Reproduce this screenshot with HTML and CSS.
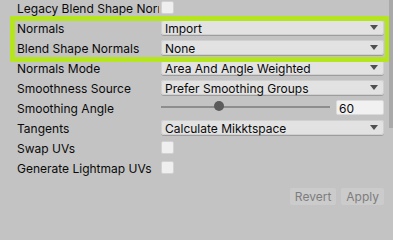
FILE: index.html
```html
<!DOCTYPE html>
<html>
<head>
<meta charset="utf-8">
<link rel="stylesheet" href="styles.css">
</head>
<body>
<div class="panel">
  <div class="content">
    <div class="row">
      <div class="label">Legacy Blend Shape Normals</div>
      <div class="ctl"><span class="check"></span></div>
    </div>
    <div class="row">
      <div class="label">Normals</div>
      <div class="ctl"><div class="popup"><span class="val">Import</span><svg class="arrow" width="8" height="5" viewBox="0 0 8 5"><path d="M0 0H8L4 5Z"/></svg></div></div>
    </div>
    <div class="row">
      <div class="label">Blend Shape Normals</div>
      <div class="ctl"><div class="popup"><span class="val">None</span><svg class="arrow" width="8" height="5" viewBox="0 0 8 5"><path d="M0 0H8L4 5Z"/></svg></div></div>
    </div>
    <div class="row">
      <div class="label">Normals Mode</div>
      <div class="ctl"><div class="popup"><span class="val">Area And Angle Weighted</span><svg class="arrow" width="8" height="5" viewBox="0 0 8 5"><path d="M0 0H8L4 5Z"/></svg></div></div>
    </div>
    <div class="row">
      <div class="label">Smoothness Source</div>
      <div class="ctl"><div class="popup"><span class="val">Prefer Smoothing Groups</span><svg class="arrow" width="8" height="5" viewBox="0 0 8 5"><path d="M0 0H8L4 5Z"/></svg></div></div>
    </div>
    <div class="row">
      <div class="label">Smoothing Angle</div>
      <div class="ctl slider">
        <div class="track-area">
          <div class="track"></div>
          <div class="thumb" style="left: calc((100% - 10px) * 0.333)"></div>
        </div>
        <div class="field">60</div>
      </div>
    </div>
    <div class="row">
      <div class="label">Tangents</div>
      <div class="ctl"><div class="popup"><span class="val">Calculate Mikktspace</span><svg class="arrow" width="8" height="5" viewBox="0 0 8 5"><path d="M0 0H8L4 5Z"/></svg></div></div>
    </div>
    <div class="row">
      <div class="label">Swap UVs</div>
      <div class="ctl"><span class="check"></span></div>
    </div>
    <div class="row">
      <div class="label">Generate Lightmap UVs</div>
      <div class="ctl"><span class="check"></span></div>
    </div>
    <div class="buttons">
      <div class="btn">Revert</div>
      <div class="btn">Apply</div>
    </div>
    <div class="highlight"></div>
  </div>
  <div class="scrollbar"><div class="sb-thumb"></div></div>
</div>
</body>
</html>
```

FILE: styles.css
```css
html, body {
  margin: 0;
  padding: 0;
  background: #c3c3c3;
  width: 393px;
  height: 210px;
  overflow: hidden;
}

body {
  font-family: Inter, "Noto Sans", sans-serif;
  font-size: 12px;
  color: #0a0a0a;
}

.panel {
  display: flex;
  width: 393px;
  height: 210px;
}

.content {
  position: relative;
  flex: 1;
  margin-top: -0.5px;
  padding-left: 17px;
  padding-right: 5px;
}

.row {
  display: flex;
  height: 20px;
  align-items: flex-start;
}

.label {
  flex: 0 0 142px;
  margin-right: 2px;
  white-space: nowrap;
  overflow: hidden;
  line-height: 17px;
}

.ctl {
  flex: 1;
  display: flex;
  min-width: 0;
}

.check {
  display: block;
  width: 13px;
  height: 13px;
  margin-top: 1px;
  box-sizing: border-box;
  background: #efefef;
  border: 1px solid #d2d2d2;
  border-radius: 2px;
}

.popup {
  flex: 1;
  display: flex;
  align-items: flex-start;
  height: 15px;
  box-sizing: border-box;
  background: #e2e2e2;
  border-radius: 3px;
  box-shadow: 0 1px 0 #9d9d9d, inset 0 0 0 1px #d0d0d0;
  padding-left: 4px;
  padding-right: 6px;
  line-height: 17px;
}

.val {
  flex: 1;
  white-space: nowrap;
  overflow: hidden;
}

.arrow {
  margin-top: 5px;
  fill: #505050;
}

.slider {
  align-items: flex-start;
}

.track-area {
  position: relative;
  flex: 1;
  height: 15px;
}

.track {
  position: absolute;
  left: 0;
  right: 0;
  top: 6px;
  height: 2px;
  background: #8d8d8d;
}

.thumb {
  position: absolute;
  top: 1.5px;
  width: 10px;
  height: 10px;
  border-radius: 50%;
  background: #5b5b5b;
}

.field {
  flex: 0 0 48px;
  margin-left: 6px;
  height: 15px;
  box-sizing: border-box;
  background: #f1f1f1;
  border: 1px solid #dadada;
  border-radius: 2px;
  padding-left: 2px;
  line-height: 16px;
}

.buttons {
  display: flex;
  justify-content: flex-end;
  gap: 5px;
  margin-top: 8px;
}

.btn {
  height: 17px;
  line-height: 18px;
  padding: 0 5px;
  background: #cbcbcb;
  border-radius: 2px;
  color: #7d7d7d;
}

.highlight {
  position: absolute;
  left: 10px;
  top: 16.5px;
  width: 380px;
  height: 46px;
  box-sizing: border-box;
  border: 5px solid #b5e61d;
  border-radius: 1px;
}

.scrollbar {
  flex: 0 0 4px;
  position: relative;
}

.sb-thumb {
  width: 4px;
  height: 128px;
  background: #a9a9a9;
}
```
